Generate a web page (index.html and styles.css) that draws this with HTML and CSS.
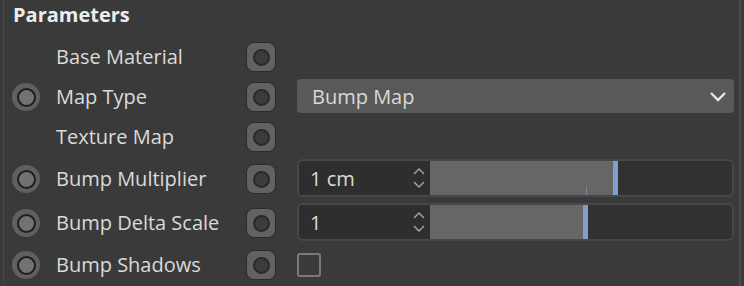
FILE: index.html
```
<!DOCTYPE html>
<html lang="en">

<head>
    <meta charset="UTF-8">
    <title>Parameters</title>
    <link rel="stylesheet" href="styles.css">
</head>

<body>
    <div class="panel">
        <h2 class="title">Parameters</h2>

        <div class="row">
            <div class="anim"></div>
            <div class="label">Base Material</div>
            <div class="key"><span></span></div>
            <div class="control"></div>
        </div>

        <div class="row">
            <div class="anim"><span class="dot"></span></div>
            <div class="label">Map Type</div>
            <div class="key"><span></span></div>
            <div class="control">
                <div class="select">
                    <span>Bump Map</span>
                    <svg class="chevron" width="18" height="11" viewBox="0 0 18 11">
                        <path d="M2 2 L9 9 L16 2" fill="none" stroke="#e8e8e8" stroke-width="2.4" />
                    </svg>
                </div>
            </div>
        </div>

        <div class="row">
            <div class="anim"></div>
            <div class="label">Texture Map</div>
            <div class="key"><span></span></div>
            <div class="control"></div>
        </div>

        <div class="row tall">
            <div class="anim"><span class="dot"></span></div>
            <div class="label">Bump Multiplier</div>
            <div class="key"><span></span></div>
            <div class="control">
                <div class="field">
                    <div class="num">
                        <span>1 cm</span>
                        <svg class="spin" width="14" height="22" viewBox="0 0 14 22">
                            <path d="M2 7 L7 2 L12 7 M2 15 L7 20 L12 15" fill="none" stroke="#a8a8a8" stroke-width="1.4" />
                        </svg>
                    </div>
                    <div class="slider">
                        <div class="fill" style="width: 183px"></div>
                        <div class="handle"></div>
                        <div class="tick" style="left: 156px"></div>
                    </div>
                </div>
            </div>
        </div>

        <div class="row tall">
            <div class="anim"><span class="dot"></span></div>
            <div class="label">Bump Delta Scale</div>
            <div class="key"><span></span></div>
            <div class="control">
                <div class="field">
                    <div class="num">
                        <span>1</span>
                        <svg class="spin" width="14" height="22" viewBox="0 0 14 22">
                            <path d="M2 7 L7 2 L12 7 M2 15 L7 20 L12 15" fill="none" stroke="#a8a8a8" stroke-width="1.4" />
                        </svg>
                    </div>
                    <div class="slider">
                        <div class="fill" style="width: 153px"></div>
                        <div class="handle"></div>
                    </div>
                </div>
            </div>
        </div>

        <div class="row">
            <div class="anim"><span class="dot"></span></div>
            <div class="label">Bump Shadows</div>
            <div class="key"><span></span></div>
            <div class="control">
                <div class="check"></div>
            </div>
        </div>
    </div>
</body>

</html>
```

FILE: styles.css
```
body {
    margin: 0;
    background-color: #3a3a3a;
    font-family: "Open Sans", "Noto Sans", sans-serif;
    color: #dadada;
}

.panel {
    width: 738px;
    height: 286px;
    margin-left: 3px;
    border-left: 1px solid #474747;
    border-right: 2px solid #4c4c4c;
    box-sizing: border-box;
}

.title {
    margin: 0;
    padding: 0 0 0 9px;
    height: 37px;
    box-sizing: border-box;
    font-size: 20px;
    line-height: 30px;
    font-weight: 700;
    color: #ededed;
}

.row {
    display: flex;
    align-items: center;
    height: 40px;
}

.row.tall {
    height: 44px;
}

.anim {
    width: 52px;
    padding-left: 8px;
    box-sizing: border-box;
}

.dot {
    display: flex;
    align-items: center;
    justify-content: center;
    width: 28px;
    height: 28px;
    border-radius: 50%;
    background-color: #606060;
}

.dot::after {
    content: "";
    width: 15px;
    height: 15px;
    border-radius: 50%;
    border: 2px solid #1e1e1e;
    background-color: #727272;
}

.label {
    width: 190px;
    font-size: 20px;
    line-height: 28px;
}

.key {
    display: flex;
    align-items: center;
    justify-content: center;
    width: 30px;
    height: 30px;
    border-radius: 8px;
    border: 1px solid #2b2b2b;
    background-color: #626262;
    box-sizing: border-box;
}

.key span {
    width: 13px;
    height: 13px;
    border-radius: 50%;
    border: 2px solid #292929;
    background-color: #3c3c3c;
}

.control {
    width: 437px;
    margin-left: 21px;
}

.select {
    display: flex;
    align-items: center;
    justify-content: space-between;
    height: 34px;
    margin-top: -2px;
    padding: 0 7px 0 15px;
    border-radius: 4px;
    background-color: #595959;
    font-size: 20px;
}

.field {
    display: flex;
    height: 38px;
    margin-top: -2px;
    border: 2px solid #484848;
    border-radius: 6px;
    box-sizing: border-box;
    overflow: hidden;
}

.num {
    display: flex;
    align-items: center;
    justify-content: space-between;
    width: 131px;
    padding: 0 4px 0 11px;
    box-sizing: border-box;
    background-color: #2e2e2e;
    font-size: 20px;
}

.slider {
    position: relative;
    display: flex;
    flex: 1;
    background-color: #313131;
}

.fill {
    background-color: #666666;
}

.handle {
    width: 5px;
    background-color: #7e9fcf;
}

.tick {
    position: absolute;
    bottom: 0;
    width: 1px;
    height: 9px;
    background-color: #7b8494;
}

.check {
    width: 20px;
    height: 20px;
    border: 2px solid #7a7a7a;
    border-radius: 3px;
}
```
